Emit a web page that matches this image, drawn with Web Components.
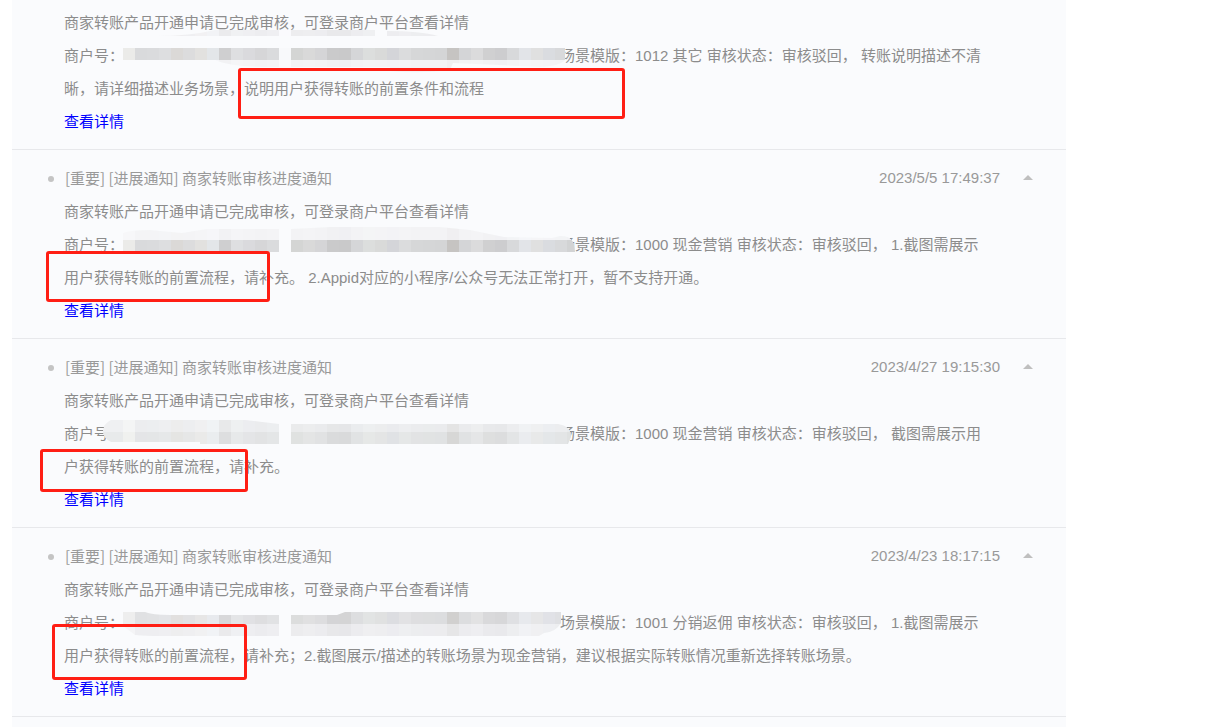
<!DOCTYPE html>
<html lang="zh-CN">
<head>
<meta charset="utf-8">
<title>商家转账审核进度通知</title>
<style>
  body {
    margin: 0;
    background: #fff;
    font: 15px/33px "Liberation Sans", "Noto Sans CJK SC", sans-serif;
    color: #8c8c8c;
  }
</style>
</head>
<body>

<notice-list>
  <notice-item continued>
    <notice-line>商家转账产品开通申请已完成审核，可登录商户平台查看详情</notice-line>
    <notice-line>商户号：<mosaic-strip variant="a"></mosaic-strip>场景模版：1012 其它 审核状态：审核驳回， 转账说明描述不清</notice-line>
    <notice-line>晰，请详细描述业务场景，说明用户获得转账的前置条件和流程<mark-frame style="--x:174px;--y:-4px;--w:387px;--h:51px"></mark-frame></notice-line>
  </notice-item>

  <notice-item date="2023/5/5 17:49:37">
    <span slot="title">[重要] [进展通知] 商家转账审核进度通知</span>
    <notice-line>商家转账产品开通申请已完成审核，可登录商户平台查看详情</notice-line>
    <notice-line>商户号：<mosaic-strip variant="b"></mosaic-strip>场景模版：1000 现金营销 审核状态：审核驳回， 1.截图需展示</notice-line>
    <notice-line>用户获得转账的前置流程，请补充。 2.Appid对应的小程序/公众号无法正常打开，暂不支持开通。<mark-frame style="--x:-18px;--y:-10px;--w:224px;--h:51px"></mark-frame></notice-line>
  </notice-item>

  <notice-item date="2023/4/27 19:15:30">
    <span slot="title">[重要] [进展通知] 商家转账审核进度通知</span>
    <notice-line>商家转账产品开通申请已完成审核，可登录商户平台查看详情</notice-line>
    <notice-line>商户号：<mosaic-strip variant="c"></mosaic-strip>场景模版：1000 现金营销 审核状态：审核驳回， 截图需展示用</notice-line>
    <notice-line>户获得转账的前置流程，请补充。<mark-frame style="--x:-24px;--y:-1px;--w:208px;--h:43px"></mark-frame></notice-line>
  </notice-item>

  <notice-item date="2023/4/23 18:17:15">
    <span slot="title">[重要] [进展通知] 商家转账审核进度通知</span>
    <notice-line>商家转账产品开通申请已完成审核，可登录商户平台查看详情</notice-line>
    <notice-line>商户号：<mosaic-strip variant="d"></mosaic-strip>场景模版：1001 分销返佣 审核状态：审核驳回， 1.截图需展示</notice-line>
    <notice-line>用户获得转账的前置流程，请补充；2.截图展示/描述的转账场景为现金营销，建议根据实际转账情况重新选择转账场景。<mark-frame style="--x:-12px;--y:-15px;--w:195px;--h:56px"></mark-frame></notice-line>
  </notice-item>
</notice-list>

<script>
class BaseElement extends HTMLElement {
  render(html) {
    if (!this.shadowRoot) this.attachShadow({ mode: "open" });
    this.shadowRoot.innerHTML = html;
  }
}

customElements.define("notice-list", class extends BaseElement {
  connectedCallback() {
    this.render(`
      <style>
        :host { display: block; box-sizing: border-box; min-height: 100vh;
                margin: 0 163px 0 12px; background: #fafbfd; }
      </style>
      <slot></slot>`);
  }
});

customElements.define("notice-item", class extends BaseElement {
  connectedCallback() {
    const header = this.hasAttribute("continued") ? "" : `
      <header>
        <i class="dot"></i>
        <slot name="title"></slot>
        <time>${this.getAttribute("date")}</time>
        <button type="button" aria-label="收起">
          <svg width="10" height="5" viewBox="0 0 10 5"><path d="M0 5 5 0 10 5Z" fill="#bfbfbf"/></svg>
        </button>
      </header>`;
    this.render(`
      <style>
        :host { display: block; padding: 11px 33px 11px 52px; border-bottom: 1px solid #e7e8eb; }
        :host([continued]) { padding-top: 6px; }
        header { display: flex; align-items: center; height: 32px; margin: 0 0 2px -16px; color: #999; }
        .dot { width: 6px; height: 6px; margin: 4px 11px 0 0; border-radius: 50%; background: #c4c4c4; }
        ::slotted([slot="title"]) { font-family: "Noto Sans CJK SC", sans-serif; }
        time { margin-left: auto; }
        button { display: flex; margin: 0 0 0 23px; padding: 0; border: 0; background: none; }
        a { color: #00f; text-decoration: none; }
        footer { height: 33px; }
      </style>
      ${header}
      <slot></slot>
      <footer><a href="#detail">查看详情</a></footer>`);
  }
});

customElements.define("notice-line", class extends BaseElement {
  connectedCallback() {
    this.render(`
      <style>
        :host { display: block; position: relative; height: 33px; white-space: nowrap; }
      </style>
      <slot></slot>`);
  }
});

customElements.define("mark-frame", class extends BaseElement {
  connectedCallback() {
    this.render(`
      <style>
        :host { position: absolute; z-index: 2; box-sizing: border-box; pointer-events: none;
                left: var(--x); top: var(--y); width: var(--w); height: var(--h);
                border: 3px solid #ff1e14; border-radius: 3px; }
      </style>`);
  }
});

/* Pixelated strip: 12px tiles, cut to a brushed outline. */
const TILES = ("ebebe9 d9dadc dadbdd dddee0 dbd9d7 dcdcdd e2e1df e3e6e9 cfcfd0 dedfe1 dadadd d6d6d8 dadbdd f8f9fb " +
  "d4d5d4 d9d9d9 d5d5d7 cacacb c9c9ca d5d6d8 dcdedd d9dad9 d4d5d9 dbdcdd d6d7d8 d5d6d7 d4d5d6 c6c4c2 " +
  "d4d5d7 dbdbdc d0d0d1 cdcdcf d8d9db e2e4e8 e0e0e0 dadce0 d8d9db d2d3d4").split(" ");

/* rows: [top, height, opacity]; shape: the visible outline */
const STRIPS = {
  a: {
    rows: [[-9, 6, .36], [9, 12, 1], [21, 13, .2]],
    shape: "M156-3Q190-3 215-9H375V-3ZM387-8Q420-8 438-3H387ZM123 9H565V21Q560 27 540 28L453 24 450 31Q420 35 390 32V28H270Q230 28 215 21H123Z"
  },
  b: {
    rows: [[-2, 14, .2], [12, 12, 1]],
    shape: "M123 5Q130 2 150 2L182 5 207 1H279V24H123ZM291 1L330-1H440L470 2 504 9 552 10 560 8Q575 7 575 24H291Z"
  },
  c: {
    rows: [[3, 12, .42], [15, 12, .66]],
    shape: "M111 3H245L279 7V27H200V25H111Q103 21 103 14T111 3ZM291 7H558Q571 9 571 20L568 27H291Z"
  },
  d: {
    rows: [[6, 12, .78], [18, 12, .38]],
    shape: "M123 6H145Q152 9 170 9H279V30H235Q150 31 135 29L123 20ZM291 9H337L345 6H561V17Q556 26 544 27L539 30H291Z"
  }
};

customElements.define("mosaic-strip", class extends BaseElement {
  connectedCallback() {
    const { rows, shape } = STRIPS[this.getAttribute("variant")];
    const rects = rows.map(([y, h, o]) =>
      `<g opacity="${o}"><rect x="99" y="${y}" width="24" height="${h}" fill="#e0e1e3"/>` +
      TILES.map((c, i) => `<rect x="${123 + i * 12}" y="${y}" width="12" height="${h}" fill="#${c}"/>`).join("") +
      `</g>`).join("");
    this.render(`
      <style>
        :host { display: inline-block; width: 436px; height: 1px; }
        svg { position: absolute; left: 36px; top: -12px; }
      </style>
      <svg width="500" height="48" viewBox="100 -12 500 48" shape-rendering="crispEdges" aria-hidden="true">
        <clipPath id="outline"><path d="${shape}"/></clipPath>
        <g clip-path="url(#outline)"><path d="${shape}" fill="#fafbfd"/>${rects}</g>
      </svg>`);
  }
});
</script>
</body>
</html>
